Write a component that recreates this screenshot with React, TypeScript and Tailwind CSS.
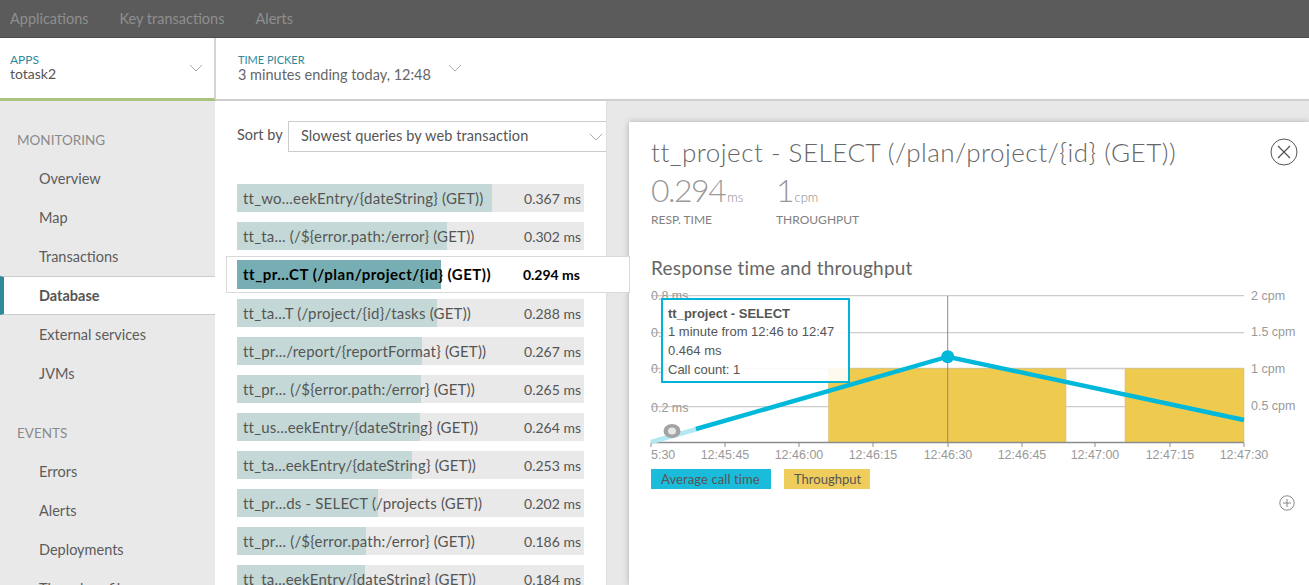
const navItems = ["Applications", "Key transactions", "Alerts"];

const monitoring = ["Overview", "Map", "Transactions", "Database", "External services", "JVMs"];
const events = ["Errors", "Alerts", "Deployments", "Thread profiler"];

const queries = [
  { name: "tt_wo...eekEntry/{dateString} (GET))", time: "0.367 ms", bar: 255 },
  { name: "tt_ta... (/${error.path:/error} (GET))", time: "0.302 ms", bar: 210 },
  { name: "tt_pr...CT (/plan/project/{id} (GET))", time: "0.294 ms", bar: 204, selected: true },
  { name: "tt_ta...T (/project/{id}/tasks (GET))", time: "0.288 ms", bar: 200 },
  { name: "tt_pr.../report/{reportFormat} (GET))", time: "0.267 ms", bar: 185 },
  { name: "tt_pr... (/${error.path:/error} (GET))", time: "0.265 ms", bar: 184 },
  { name: "tt_us...eekEntry/{dateString} (GET))", time: "0.264 ms", bar: 183 },
  { name: "tt_ta...eekEntry/{dateString} (GET))", time: "0.253 ms", bar: 175 },
  { name: "tt_pr...ds - SELECT (/projects (GET))", time: "0.202 ms", bar: 141 },
  { name: "tt_pr... (/${error.path:/error} (GET))", time: "0.186 ms", bar: 129 },
  { name: "tt_ta...eekEntry/{dateString} (GET))", time: "0.184 ms", bar: 128 },
];

const ticks = [
  { x: 651, label: "12:45:30" },
  { x: 725, label: "12:45:45" },
  { x: 799, label: "12:46:00" },
  { x: 873, label: "12:46:15" },
  { x: 948, label: "12:46:30" },
  { x: 1022, label: "12:46:45" },
  { x: 1095, label: "12:47:00" },
  { x: 1170, label: "12:47:15" },
  { x: 1244, label: "12:47:30" },
];

function Chevron({ className }: { className: string }) {
  return (
    <svg className={className} width="14" height="8" viewBox="0 0 14 8" fill="none" stroke="#aaaaaa" strokeWidth="1">
      <path d="M1 1l6 6 6-6" />
    </svg>
  );
}

function NavRow({ label, active }: { label: string; active?: boolean }) {
  if (active) {
    return (
      <div className="flex h-[39px] items-center border-y border-[#cccccc] border-l-4 border-l-[#2e8a9b] bg-white pl-[35px] font-bold text-[#555555]">
        {label}
      </div>
    );
  }
  return <div className="flex h-[39px] items-center pl-[39px] text-[#5c5c5c]">{label}</div>;
}

function Chart() {
  return (
    <div className="relative -ml-[11px] h-[175px] w-[669px]">
      <svg width="669" height="175" viewBox="640 285 669 175" className="block" fontFamily="'Liberation Sans', Arial, sans-serif" fontSize="12.5" fill="#999999">
        <defs>
          <clipPath id="plot-left">
            <rect x="651" y="285" width="658" height="175" />
          </clipPath>
        </defs>
        {[295.7, 332.7, 368.5, 406.7].map((y) => (
          <line key={y} x1="651" x2="1244" y1={y} y2={y} stroke="#cccccc" strokeWidth="1.3" />
        ))}
        <rect x="828.5" y="368.5" width="237.5" height="74" fill="#eecb4e" stroke="#d6c07a" strokeWidth="0.6" />
        <rect x="1125" y="368.5" width="119" height="74" fill="#eecb4e" stroke="#d6c07a" strokeWidth="0.6" />
        <line x1="651" x2="1244" y1="442.5" y2="442.5" stroke="#8c8c8c" strokeWidth="1.5" />
        {ticks.map((t) => (
          <line key={t.x} x1={t.x} x2={t.x} y1="443" y2="447" stroke="#8c8c8c" strokeWidth="1" />
        ))}
        <line x1="947.7" x2="947.7" y1="296" y2="443" stroke="#8a8a8a" strokeWidth="1" />
        <path d="M651 442 L697 429" stroke="#b3e7f2" strokeWidth="4.5" fill="none" />
        <path d="M696 429 L947.7 356.7 L1244 420" stroke="#00b8d9" strokeWidth="4.5" fill="none" />
        <circle cx="947.7" cy="356.7" r="6.5" fill="#00b8d9" />
        <ellipse cx="672" cy="431" rx="8.5" ry="7" fill="#a3a3a3" />
        <ellipse cx="672" cy="431" rx="4" ry="3.5" fill="#e6e6e6" />
        <g clipPath="url(#plot-left)">
          {ticks.map((t) => (
            <text key={t.x} x={t.x} y="458.5" textAnchor="middle">{t.label}</text>
          ))}
        </g>
        <text x="651" y="300">0.8 ms</text>
        <text x="651" y="337">0.6 ms</text>
        <text x="651" y="373">0.4 ms</text>
        <text x="651" y="411.5">0.2 ms</text>
        <text x="1251" y="300">2 cpm</text>
        <text x="1251" y="336">1.5 cpm</text>
        <text x="1251" y="373">1 cpm</text>
        <text x="1251" y="410">0.5 cpm</text>
      </svg>
      <div className="absolute left-[21px] top-[13px] flex h-[85px] w-[189px] flex-col justify-center border-2 border-[#00b5d8] bg-white/90 pl-[5px] pt-[3px] font-['Liberation_Sans',Arial,sans-serif] text-[13px] leading-[18.6px] text-[#555555]">
        <div className="font-bold">tt_project - SELECT</div>
        <div>1 minute from 12:46 to 12:47</div>
        <div>0.464 ms</div>
        <div>Call count: 1</div>
      </div>
    </div>
  );
}

export default function App() {
  return (
    <div className="flex h-[585px] flex-col overflow-hidden bg-white font-['Lato',sans-serif] text-[14.5px] text-[#555555]">
      {/* Top nav */}
      <div className="flex h-[38px] shrink-0 items-center gap-[31px] border-b border-[#4a4a4a] bg-[#5b5b5b] pl-[10px] text-[#8f8f8f]">
        {navItems.map((item) => (
          <span key={item}>{item}</span>
        ))}
      </div>

      {/* Apps + time picker */}
      <div className="flex h-[63px] shrink-0">
        <div className="relative w-[216px] border-r-2 border-b-[3px] border-r-[#d4d4d4] border-b-[#a8c47e] pl-[10px] pt-[15px]">
          <div className="text-[12px] leading-[14px] text-[#2e8a9b]">APPS</div>
          <div className="text-[14px] leading-[14px] text-[#555555]">totask2</div>
          <Chevron className="absolute left-[189px] top-[26px]" />
        </div>
        <div className="relative flex-1 border-b-2 border-[#cfcfcf] pl-[22px] pt-[15px]">
          <div className="text-[11px] leading-[14px] text-[#2e8a9b]">TIME PICKER</div>
          <div className="leading-[16px] text-[#666666]">3 minutes ending today, 12:48</div>
          <Chevron className="absolute left-[232px] top-[26px]" />
        </div>
      </div>

      <div className="flex min-h-0 flex-1">
        {/* Sidebar */}
        <div className="w-[215px] shrink-0 bg-[#e9e9e9] pt-[19px]">
          <div className="flex h-[39px] items-center pl-[17px] pt-[2px] text-[13.5px] text-[#8a8a8a]">MONITORING</div>
          {monitoring.map((m) => (
            <NavRow key={m} label={m} active={m === "Database"} />
          ))}
          <div className="mt-5 flex h-[39px] items-center pl-[17px] pt-[2px] text-[13.5px] text-[#8a8a8a]">EVENTS</div>
          {events.map((m) => (
            <NavRow key={m} label={m} />
          ))}
        </div>

        {/* Query list */}
        <div className="relative z-10 w-[392px] shrink-0 border-r border-[#dddddd] bg-white pl-[22px] pt-5">
          <div className="flex items-center">
            <span className="mr-[4px] -mt-[3px] w-[47px] whitespace-nowrap text-[#555555]">Sort by</span>
            <div className="relative flex h-[31px] flex-1 items-center border border-r-0 border-[#cccccc] pb-[2px] pl-3 tracking-[0.1px] text-[#555555]">
              Slowest queries by web transaction
              <Chevron className="absolute right-[3px] top-[11px]" />
            </div>
          </div>

          <div className="mt-[32px] flex w-[347px] flex-col gap-[10px]">
            {queries.map((q) =>
              q.selected ? (
                <div key={q.time} className="relative z-10 -mx-[11px] -my-1 w-[404px] border border-[#d9d9d9] bg-white py-[3px] pl-[10px]">
                  <div className="relative flex h-[29px] w-[347px] items-center justify-between pl-[6px] pr-[4px] text-[14px] font-bold text-black">
                    <div className="absolute inset-y-0 left-0 bg-[#77aeb3]" style={{ width: q.bar }} />
                    <span className="relative whitespace-nowrap text-[15px] tracking-[0.5px]">{q.name}</span>
                    <span className="relative whitespace-nowrap">{q.time}</span>
                  </div>
                </div>
              ) : (
                <div key={q.time} className="relative flex h-[28px] shrink-0 items-center justify-between bg-[#e9e9e9] pl-[6px] pr-[3px] text-[14px] text-[#555555]">
                  <div className="absolute inset-y-0 left-0 bg-[#c4d9d7]" style={{ width: q.bar }} />
                  <span className="relative whitespace-nowrap text-[15px] tracking-[0.2px]">{q.name}</span>
                  <span className="relative whitespace-nowrap">{q.time}</span>
                </div>
              )
            )}
          </div>
        </div>

        {/* Detail */}
        <div className="min-w-0 flex-1 bg-[#e8e8e8] pl-[22px] pt-[21px]">
          <div className="h-full bg-white pl-[22px] pt-[14px] pr-[11px] shadow-[0_0_6px_rgba(0,0,0,0.25)]">
            <div className="flex items-center justify-between">
              <div className="text-[26px] font-light leading-8 tracking-[0.5px] text-[#666666]">tt_project - SELECT (/plan/project/{"{id}"} (GET))</div>
              <svg width="28" height="28" viewBox="0 0 28 28" fill="none" stroke="#555555" strokeWidth="1">
                <circle cx="14" cy="14" r="13" />
                <path d="M8 8l12 12M20 8L8 20" strokeWidth="1.3" />
              </svg>
            </div>
            <div className="mt-[3px] flex gap-[30px]">
              <div className="w-[95px]">
                <div className="text-[32px] font-light leading-[38px] tracking-[-1.5px] text-[#999999]">
                  0.294<span className="ml-[2px] text-[13px] leading-none tracking-normal text-[#888888]">ms</span>
                </div>
                <div className="mt-[3px] text-[12px] leading-4 text-[#808080]">RESP. TIME</div>
              </div>
              <div>
                <div className="text-[32px] font-light leading-[38px] text-[#999999]">
                  1<span className="text-[13px] leading-none text-[#888888]">cpm</span>
                </div>
                <div className="mt-[3px] text-[12px] leading-4 text-[#808080]">THROUGHPUT</div>
              </div>
            </div>
            <div className="mt-[28px] text-[19px] leading-6 tracking-[0.2px] text-[#666666]">Response time and throughput</div>
            <div className="mt-[5px]">
              <Chart />
            </div>
            <div className="mt-[9px] flex gap-[13px] text-[13px] leading-5 text-[#555555]">
              <div className="h-5 w-[120px] bg-[#1bbcdb] pl-[10px] tracking-[0.1px]">Average call time</div>
              <div className="h-5 w-[86px] bg-[#eecd5c] pl-[10px]">Throughput</div>
            </div>
            <div className="mt-[6px] flex justify-end pr-[3px]">
              <svg width="16" height="16" viewBox="0 0 16 16" fill="none" stroke="#888888" strokeWidth="1">
                <circle cx="8" cy="8" r="7.2" />
                <path d="M8 4v8M4 8h8" />
              </svg>
            </div>
          </div>
        </div>
      </div>
    </div>
  );
}
